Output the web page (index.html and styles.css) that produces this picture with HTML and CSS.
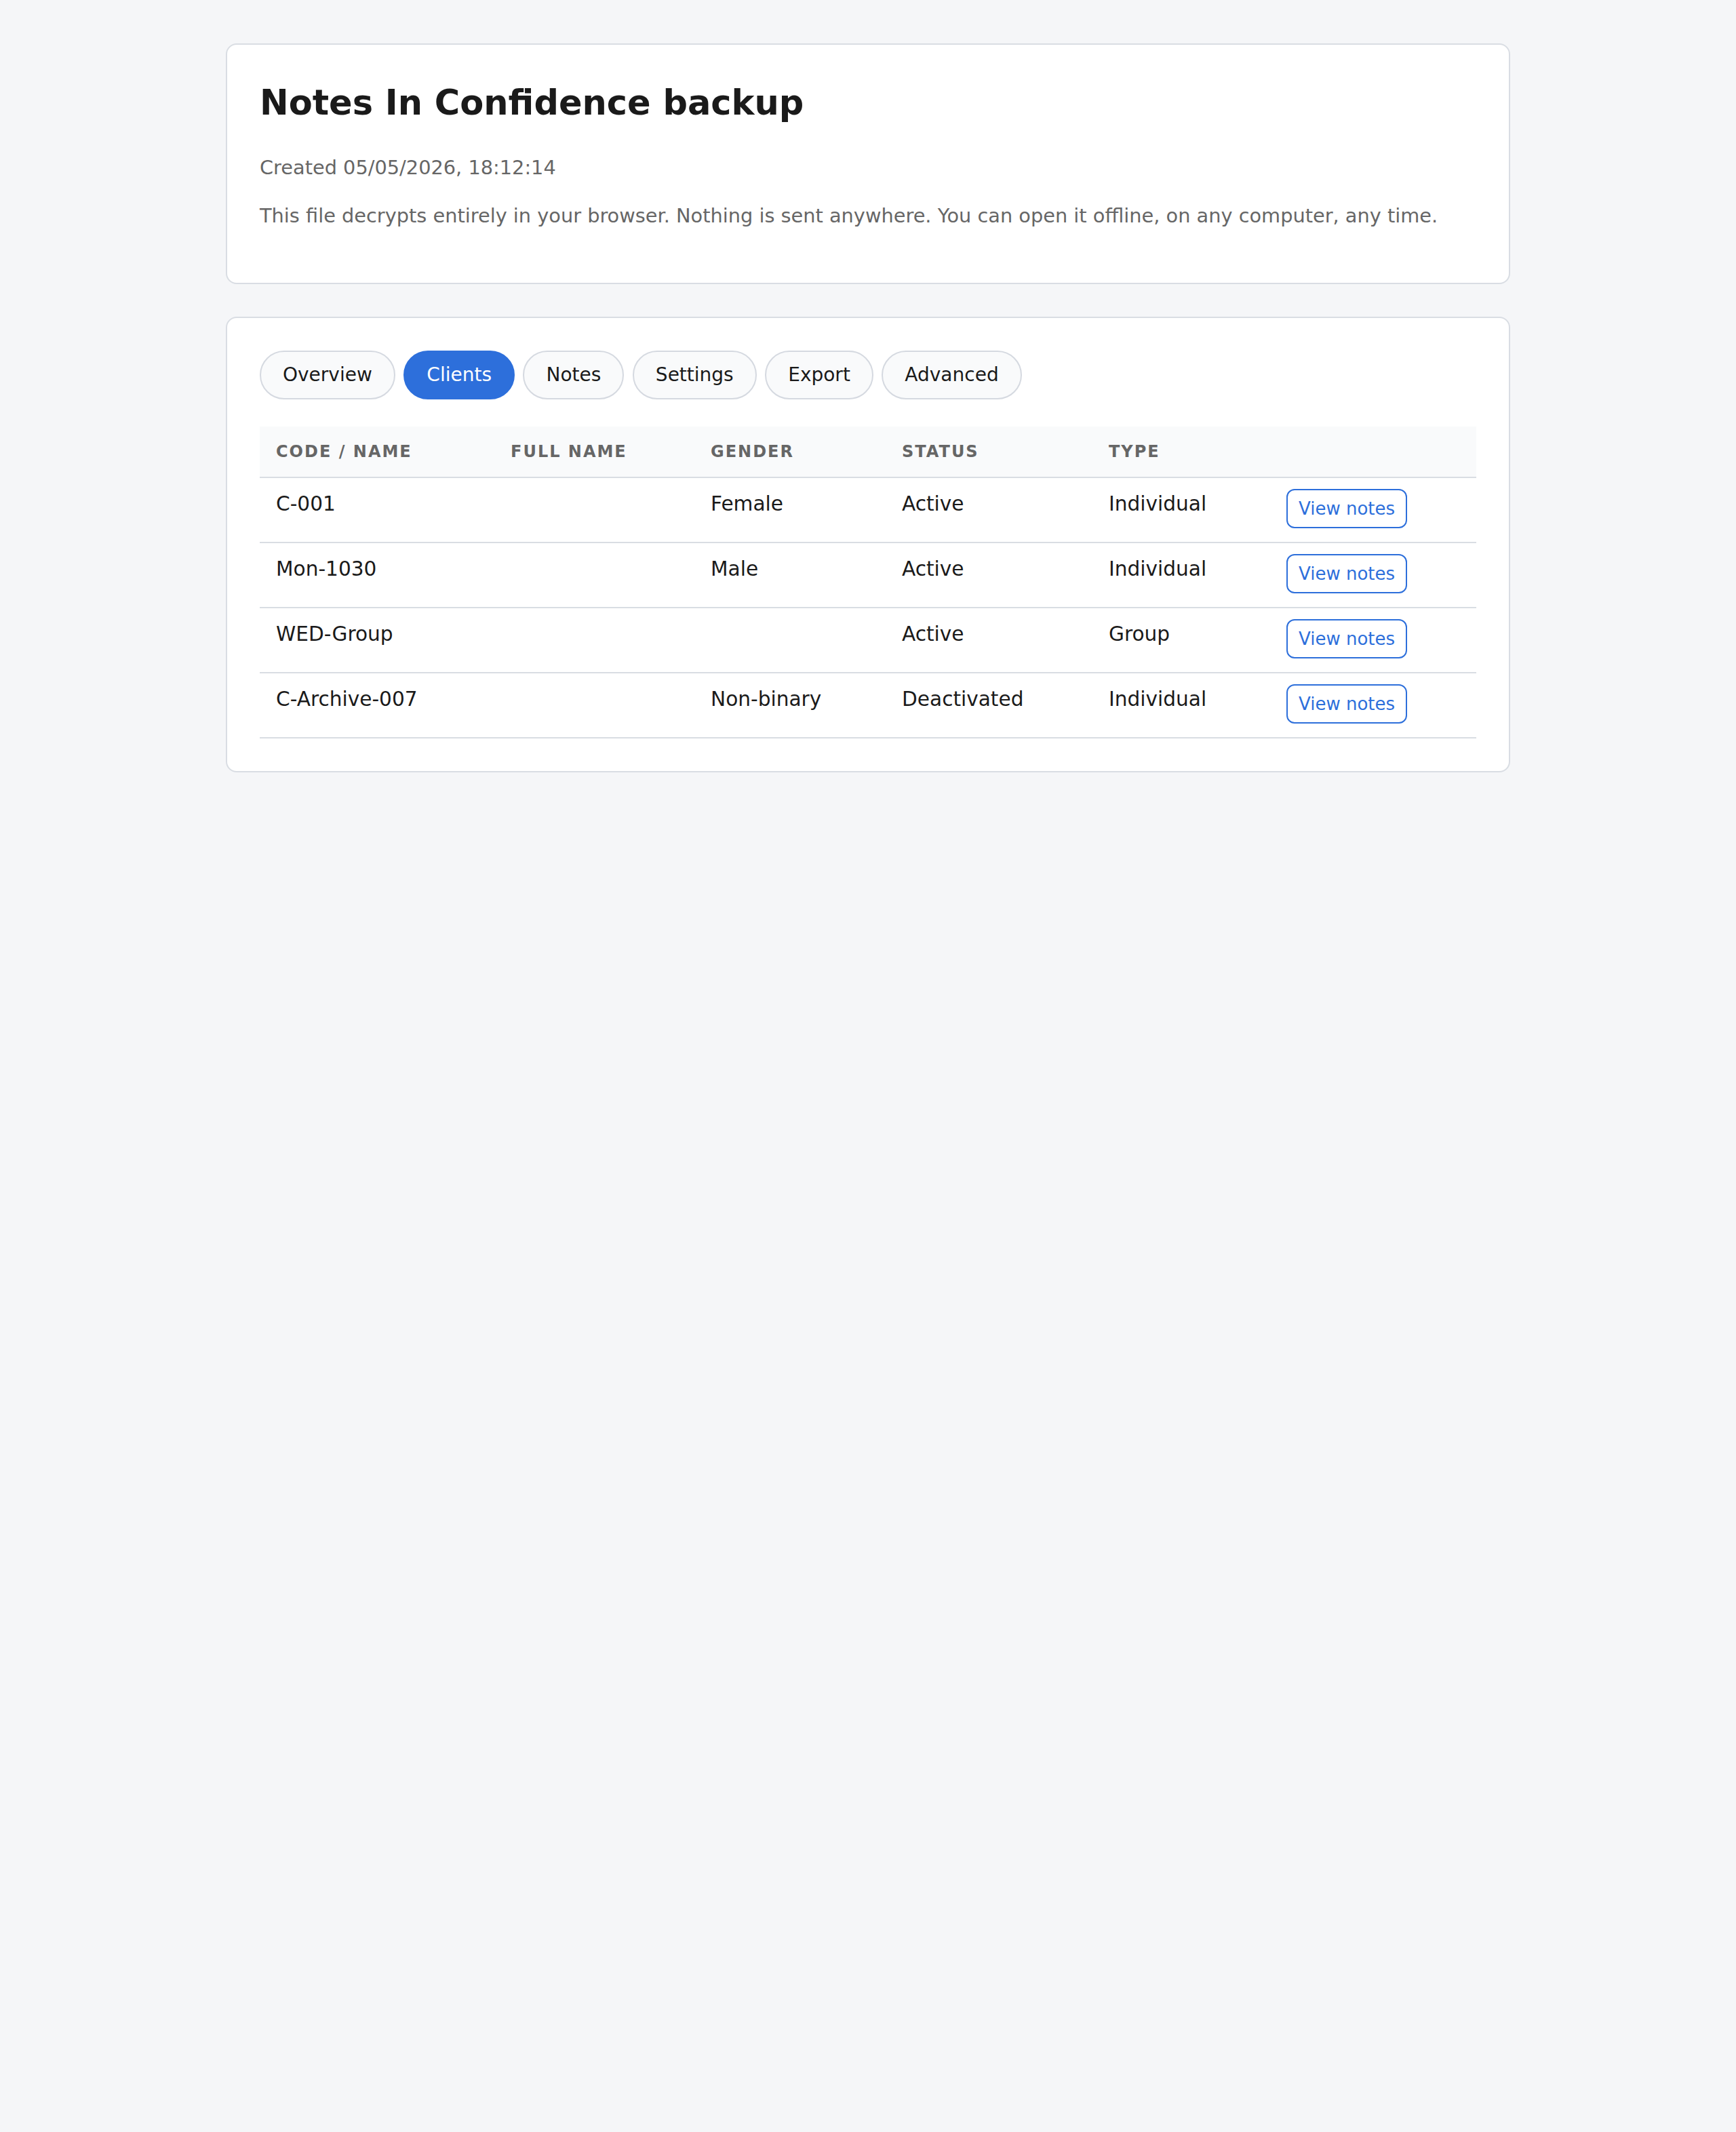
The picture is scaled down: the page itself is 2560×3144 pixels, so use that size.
FILE: index.html
```html
<!DOCTYPE html>
<html lang="en">
<head>
<meta charset="utf-8">
<title>Notes In Confidence backup</title>
<link rel="stylesheet" href="styles.css">
</head>
<body>
<main class="page">
  <section class="card intro">
    <h1 class="title">Notes In Confidence backup</h1>
    <p class="muted created">Created 05/05/2026, 18:12:14</p>
    <p class="muted">This file decrypts entirely in your browser. Nothing is sent anywhere. You can open it offline, on any computer, any time.</p>
  </section>

  <section class="card">
    <nav class="tabs">
      <button class="tab">Overview</button>
      <button class="tab active">Clients</button>
      <button class="tab">Notes</button>
      <button class="tab">Settings</button>
      <button class="tab">Export</button>
      <button class="tab">Advanced</button>
    </nav>

    <table class="clients">
      <colgroup>
        <col class="c-code">
        <col class="c-full">
        <col class="c-gender">
        <col class="c-status">
        <col class="c-type">
        <col class="c-action">
      </colgroup>
      <thead>
        <tr>
          <th>Code / Name</th>
          <th>Full name</th>
          <th>Gender</th>
          <th>Status</th>
          <th>Type</th>
          <th></th>
        </tr>
      </thead>
      <tbody>
        <tr>
          <td>C-001</td>
          <td></td>
          <td>Female</td>
          <td>Active</td>
          <td>Individual</td>
          <td><button class="view">View notes</button></td>
        </tr>
        <tr>
          <td>Mon-1030</td>
          <td></td>
          <td>Male</td>
          <td>Active</td>
          <td>Individual</td>
          <td><button class="view">View notes</button></td>
        </tr>
        <tr>
          <td>WED-Group</td>
          <td></td>
          <td></td>
          <td>Active</td>
          <td>Group</td>
          <td><button class="view">View notes</button></td>
        </tr>
        <tr>
          <td>C-Archive-007</td>
          <td></td>
          <td>Non-binary</td>
          <td>Deactivated</td>
          <td>Individual</td>
          <td><button class="view">View notes</button></td>
        </tr>
      </tbody>
    </table>
  </section>
</main>
</body>
</html>
```

FILE: styles.css
```css
html, body {
  margin: 0;
  padding: 0;
  background: #f5f6f8;
}

body {
  font-family: "DejaVu Sans", "Noto Sans", sans-serif;
  font-size: 32px;
  color: #1a1a1a;
  line-height: 1.5;
}

.page {
  max-width: 1894px;
  margin: 64px auto;
  display: flex;
  flex-direction: column;
  gap: 48px;
}

.card {
  background: #ffffff;
  border: 2px solid #d9dde3;
  border-radius: 16px;
  padding: 48px;
}

.title {
  font-size: 51px;
  font-weight: 700;
  line-height: 1.5;
  margin: 0 0 35px;
  color: #1a1a1a;
}

.muted {
  font-size: 28.8px;
  color: #666666;
  margin: 28.8px 0;
}

.created {
  margin-top: 0;
}

.tabs {
  display: flex;
  flex-wrap: wrap;
  gap: 12.5px;
  margin-bottom: 40px;
}

.tab {
  font-family: "DejaVu Sans", "Noto Sans", sans-serif;
  font-size: 28px;
  line-height: 38px;
  padding: 15px 32px;
  border: 2px solid #d5d9e0;
  border-radius: 999px;
  background: #f9fafb;
  color: #1a1a1a;
}

.tab.active {
  background: #2d6fdb;
  border-color: #2d6fdb;
  color: #ffffff;
}

.clients {
  width: 100%;
  border-collapse: collapse;
  table-layout: fixed;
  font-size: 29.6px;
}

.c-code { width: 346px; }
.c-full { width: 295px; }
.c-gender { width: 282px; }
.c-status { width: 305px; }
.c-type { width: 262px; }
.c-action { width: auto; }

.clients th {
  text-align: left;
  font-size: 24px;
  line-height: 42px;
  font-weight: 700;
  text-transform: uppercase;
  letter-spacing: 2px;
  color: #666666;
  background: #f9fafb;
  padding: 16px 24px;
  border-bottom: 2px solid #d9dde3;
}

.clients td {
  vertical-align: top;
  line-height: 44px;
  padding: 16px 24px 20px;
  border-bottom: 2px solid #d9dde3;
}

.view {
  font-family: "DejaVu Sans", "Noto Sans", sans-serif;
  font-size: 26px;
  line-height: normal;
  padding: 12px 16px;
  background: #ffffff;
  color: #2d6fdb;
  border: 2px solid #2d6fdb;
  border-radius: 12px;
}
```
